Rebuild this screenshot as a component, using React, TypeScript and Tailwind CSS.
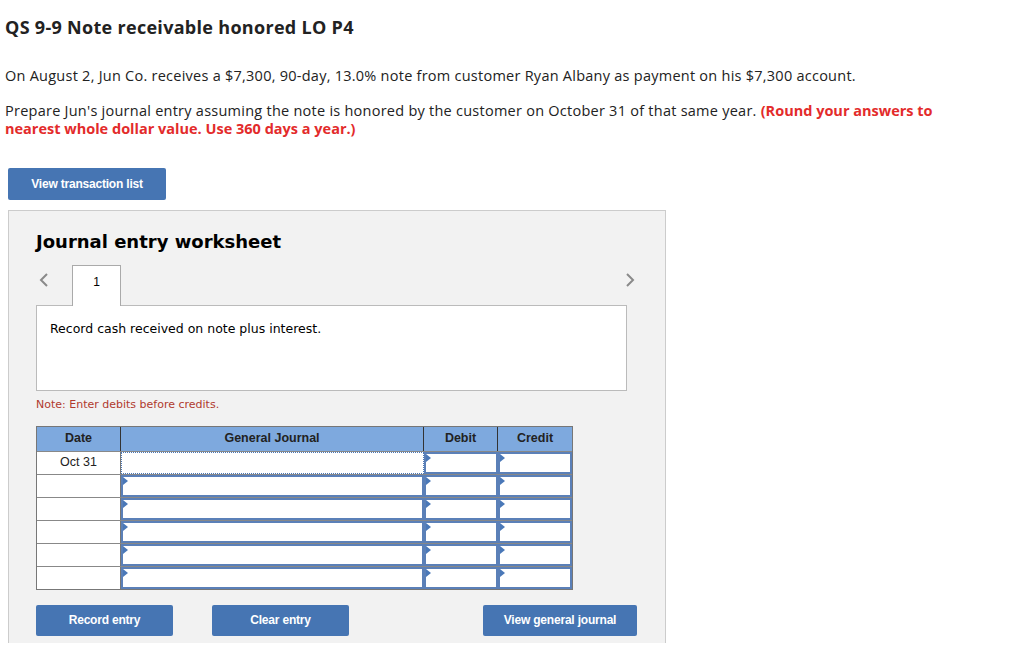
import React from "react";

const rows = [0, 1, 2, 3, 4, 5];

function Marker() {
  return (
    <span className="absolute left-0 top-0 h-0 w-0 border-y-[4px] border-l-[5px] border-y-transparent border-l-[#4a78b8]" />
  );
}

function InputCell({ focus, marker = true }: { focus?: boolean; marker?: boolean }) {
  return (
    <div
      className={[
        "relative h-full bg-white",
        focus ? "border border-dotted border-[#4a78b8]" : "border-2 border-[#5b80b8]",
      ].join(" ")}
    >
      {marker && <Marker />}
    </div>
  );
}

function ActionButton({ label, className }: { label: string; className: string }) {
  return (
    <button
      className={[
        "h-[31px] rounded-[2px] bg-[#4675b3] text-[12px] font-bold text-white tracking-[-0.2px]",
        className,
      ].join(" ")}
      style={{ fontFamily: '"Liberation Sans", Arial, sans-serif' }}
    >
      {label}
    </button>
  );
}

export default function App() {
  return (
    <div className="min-h-[663px] w-[1024px] bg-white text-[#222]" style={{ fontFamily: '"Open Sans", Lato, sans-serif' }}>
      <div className="px-[5px] pt-[16px]">
        <h1 className="text-[18px] font-bold leading-[22px] tracking-[0.3px] text-[#222]">QS 9-9 Note receivable honored LO P4</h1>
        <p className="mt-[29px] text-[14.5px] leading-[18px] tracking-[0.25px]">
          On August 2, Jun Co. receives a $7,300, 90-day, 13.0% note from customer Ryan Albany as payment on his $7,300 account.
        </p>
        <p className="mt-[17px] w-[945px] text-[14.5px] leading-[18px] tracking-[0.25px]">
          Prepare Jun's journal entry assuming the note is honored by the customer on October 31 of that same year.{" "}
          <span className="font-bold tracking-[0px] text-[#e32b2b]">(Round your answers to nearest whole dollar value. Use 360 days a year.)</span>
        </p>
      </div>

      <div className="ml-[8px] mt-[30px]">
        <ActionButton label="View transaction list" className="w-[158px] h-[32px]" />
      </div>

      <div
        className="ml-[8px] mt-[10px] h-[433px] w-[658px] border border-b-0 border-[#cccccc] bg-[#f2f2f2] pl-[27px]"
        style={{ fontFamily: '"DejaVu Sans", Verdana, sans-serif' }}
      >
        <h2 className="mt-[19px] text-[18px] font-bold leading-[24px] text-black">Journal entry worksheet</h2>

        <div className="mt-[11px] flex w-[600px] items-end">
          <div className="flex h-[40px] w-[36px] items-center pb-[10px] pl-[3px]">
            <svg width="10" height="16" viewBox="0 0 10 16" fill="none" stroke="#8a8a8a" strokeWidth="2">
              <path d="M8 2 L2 8 L8 14" />
            </svg>
          </div>
          <div className="relative z-10 -mb-px flex h-[41px] w-[49px] justify-center border border-b-0 border-[#aaaaaa] bg-white pt-[7px] text-[12px] text-black" style={{ fontFamily: '"Liberation Sans", Arial, sans-serif' }}>
            1
          </div>
          <div className="flex h-[40px] flex-1 items-center justify-end pb-[10px] pr-[1px]">
            <svg width="10" height="16" viewBox="0 0 10 16" fill="none" stroke="#8a8a8a" strokeWidth="2">
              <path d="M2 2 L8 8 L2 14" />
            </svg>
          </div>
        </div>

        <div className="h-[86px] w-[591px] border border-[#bbbbbb] bg-white px-[13px] pt-[14px] text-[12.5px] text-black">
          Record cash received on note plus interest.
        </div>

        <p className="mt-[6px] text-[11px] text-[#b03a2e]">Note: Enter debits before credits.</p>

        <div className="mt-[12px] w-[537px] border border-[#777] bg-white" style={{ fontFamily: '"Liberation Sans", Arial, sans-serif' }}>
          <div className="grid h-[24px] grid-cols-[84px_303px_74px_74px] bg-[#7ea9de] text-[12.5px] font-bold text-[#222]">
            <div className="flex items-center justify-center border-r border-[#333]">Date</div>
            <div className="flex items-center justify-center border-r border-[#333]">General Journal</div>
            <div className="flex items-center justify-center border-r border-[#333]">Debit</div>
            <div className="flex items-center justify-center">Credit</div>
          </div>
          {rows.map((r) => (
            <div key={r} className="grid h-[23px] grid-cols-[84px_303px_74px_74px] border-t border-[#888]">
              <div className="flex items-center justify-center border-r border-[#777] text-[12.5px] text-[#222]">
                {r === 0 ? "Oct 31" : ""}
              </div>
              <InputCell focus={r === 0} marker={r !== 0} />
              <InputCell />
              <InputCell />
            </div>
          ))}
        </div>

        <div className="mt-[15px] flex w-[601px] items-center">
          <ActionButton label="Record entry" className="w-[137px]" />
          <ActionButton label="Clear entry" className="ml-[39px] w-[137px]" />
          <ActionButton label="View general journal" className="ml-auto w-[154px]" />
        </div>
      </div>
    </div>
  );
}
